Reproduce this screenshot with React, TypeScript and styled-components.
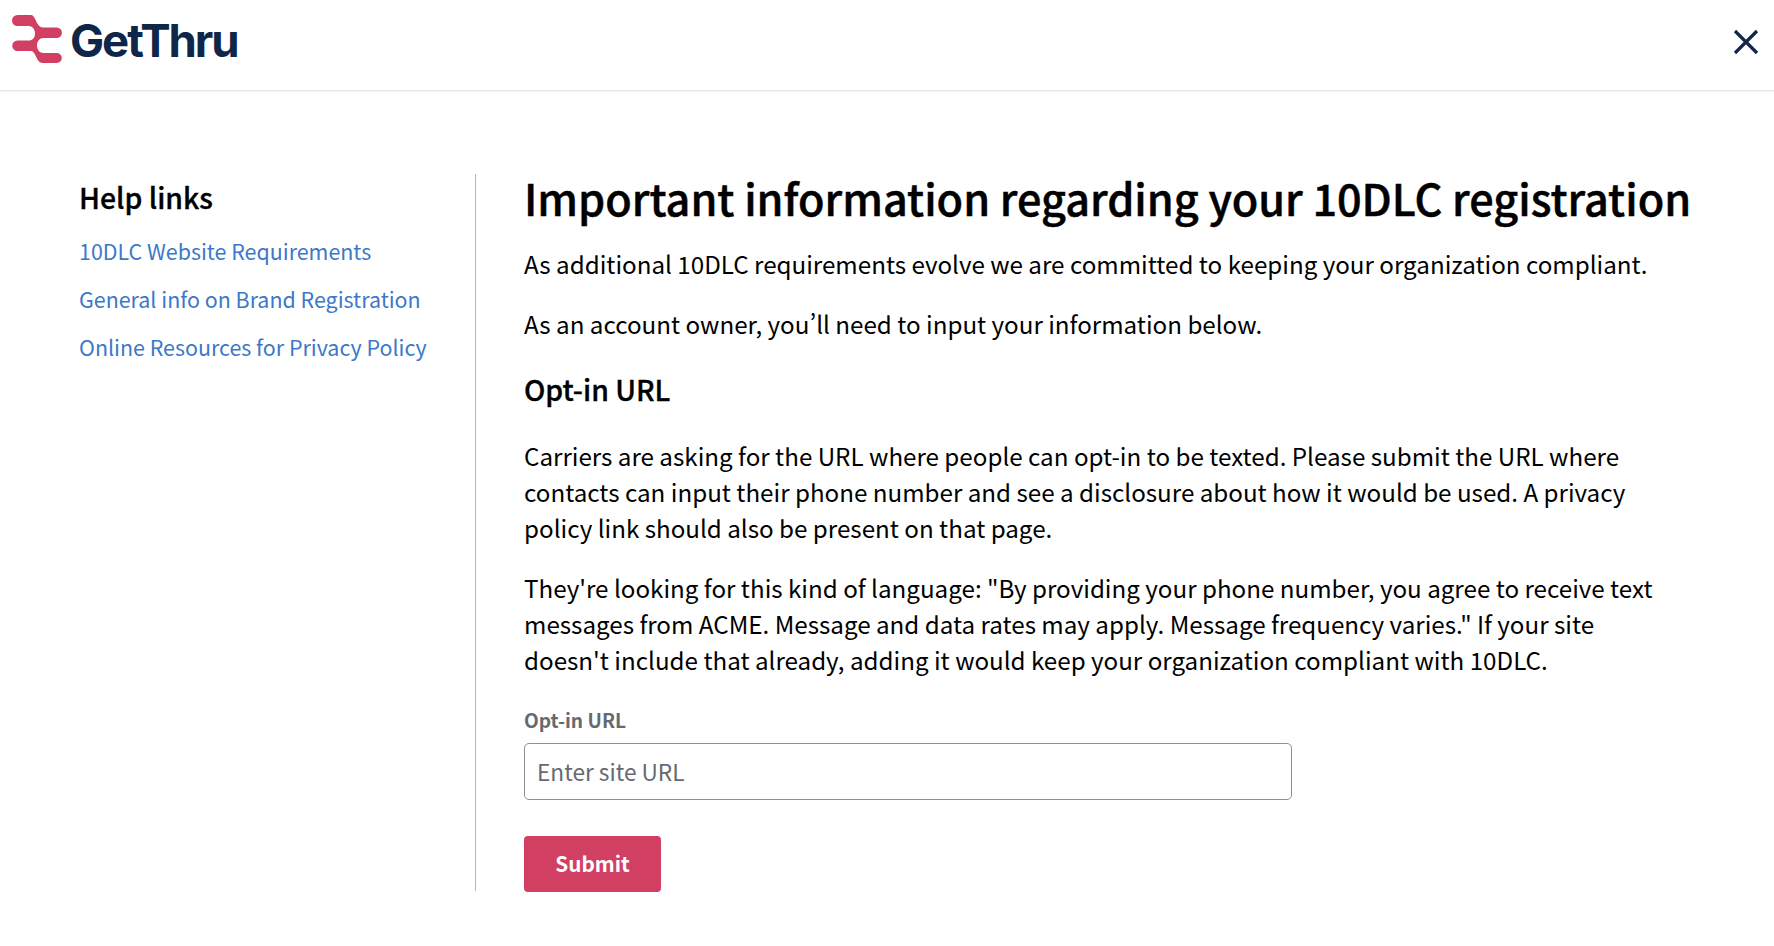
import styled, { createGlobalStyle } from "styled-components"

const GlobalStyle = createGlobalStyle`
    html, body {
        margin: 0;
        padding: 0;
        background: #fff;
    }
    body {
        font-family: "Noto Sans CJK SC", "Noto Sans", sans-serif;
        font-variant-east-asian: proportional-width;
        color: #000;
    }
    * {
        box-sizing: border-box;
    }
`
const Header = styled.header`
    height: 91px;
    padding: 0 15px 8px 12px;
    display: flex;
    align-items: center;
    justify-content: space-between;
    border-bottom: solid 1px #e6e6e6;
    box-shadow: 0 1px 2px rgba(0,0,0,.06);
`
const Brand = styled.div`
    display: flex;
    align-items: center;
    gap: 8px;
`
const LogoMark = styled.svg`
    margin-bottom: 4px;
`
const BrandName = styled.span`
    font-family: "Inter", sans-serif;
    font-weight: 700;
    font-size: 45.5px;
    line-height: 50px;
    letter-spacing: -0.045em;
    color: #0f2648;
`
const CloseButton = styled.button`
    width: 26px;
    height: 26px;
    margin-top: 2px;
    padding: 0;
    border: 0;
    background: transparent;
    display: flex;
    color: #14264a;
`
const Page = styled.div`
    display: flex;
    padding: 83px 0 0 79px;
`
const Sidebar = styled.aside`
    flex: none;
    width: 397px;
    height: 717px;
    border-right: solid 1px #b3b6bb;
`
const SideTitle = styled.h2`
    margin: 0 0 13px;
    font-size: 28.35px;
    line-height: 46px;
    font-weight: 500;
    -webkit-text-stroke: 0.35px #000;
`
const HelpLink = styled.a`
    display: block;
    font-size: 21.43px;
    line-height: 36px;
    margin-bottom: 12px;
    color: #3b78c9;
    text-decoration: none;
`
const Main = styled.main`
    padding-left: 48px;
    flex: 1;
    min-width: 0;
`
const Title = styled.h1`
    margin: -2px 0 24px;
    font-size: 43.2px;
    line-height: 50px;
    font-weight: 500;
    -webkit-text-stroke: 0.5px #000;
    white-space: nowrap;
`
const Text = styled.p`
    margin: 0 0 24px;
    font-size: 24.18px;
    line-height: 36px;
    width: 1150px;
`
const SubTitle = styled.h3`
    margin: 29px 0 31px;
    font-size: 28.35px;
    line-height: 36px;
    font-weight: 500;
    -webkit-text-stroke: 0.35px #000;
`
const FieldLabel = styled.label`
    display: block;
    margin-top: 28px;
    margin-bottom: 9px;
    font-size: 19.2px;
    line-height: 28px;
    font-weight: 700;
    color: #666a70;
`
const UrlInput = styled.input`
    display: block;
    width: 768px;
    height: 57px;
    padding: 0 12px;
    border: solid 1px #8c9096;
    border-radius: 5px;
    font-family: inherit;
    font-size: 22.68px;
    outline: 0;
    &::placeholder {
        color: #666a70;
        opacity: 1;
    }
`
const SubmitButton = styled.button`
    display: block;
    margin-top: 36px;
    width: 137px;
    height: 56px;
    padding: 0 0 3px;
    border: 0;
    border-radius: 4px;
    background: #d14063;
    color: #fff;
    font-family: inherit;
    font-size: 20.7px;
    font-weight: 700;
`

function Logo() {
    return (
        <LogoMark width="50" height="48" viewBox="0 0 50 48">
            <path
                d="M5.5 0H19C24 0 24 12.5 31 12.5H44.7A5.25 5.25 0 0 1 44.7 23H31C28 23 25 26 25 30.5C25 35 28 38 31 38H44.8A5 5 0 0 1 44.8 48H31C24 48 24 36 19 36H5.5A5.25 5.25 0 0 1 5.5 25.5H17C20 25.5 23 23 23 18.25C23 14 20 11 17 11H5.5A5.5 5.5 0 0 1 5.5 0Z"
                fill="#d14063"
            />
        </LogoMark>
    )
}

function App() {
    return (
        <>
            <GlobalStyle />
            <Header>
                <Brand>
                    <Logo />
                    <BrandName>GetThru</BrandName>
                </Brand>
                <CloseButton aria-label="Close">
                    <svg width="26" height="26" viewBox="0 0 26 26" fill="none">
                        <path d="M2 2L24 24M24 2L2 24" stroke="currentColor" strokeWidth="3.2" />
                    </svg>
                </CloseButton>
            </Header>
            <Page>
                <Sidebar>
                    <SideTitle>Help links</SideTitle>
                    <HelpLink href="#">10DLC Website Requirements</HelpLink>
                    <HelpLink href="#">General info on Brand Registration</HelpLink>
                    <HelpLink href="#">Online Resources for Privacy Policy</HelpLink>
                </Sidebar>
                <Main>
                    <Title>Important information regarding your 10DLC registration</Title>
                    <Text>As additional 10DLC requirements evolve we are committed to keeping your organization compliant.</Text>
                    <Text>As an account owner, you’ll need to input your information below.</Text>
                    <SubTitle>Opt-in URL</SubTitle>
                    <Text>Carriers are asking for the URL where people can opt-in to be texted. Please submit the URL where contacts can input their phone number and see a disclosure about how it would be used. A privacy policy link should also be present on that page.</Text>
                    <Text>They're looking for this kind of language: "By providing your phone number, you agree to receive text messages from ACME. Message and data rates may apply. Message frequency varies." If your site doesn't include that already, adding it would keep your organization compliant with 10DLC.</Text>
                    <FieldLabel>Opt-in URL</FieldLabel>
                    <UrlInput placeholder="Enter site URL" />
                    <SubmitButton>Submit</SubmitButton>
                </Main>
            </Page>
        </>
    )
}
export default App
